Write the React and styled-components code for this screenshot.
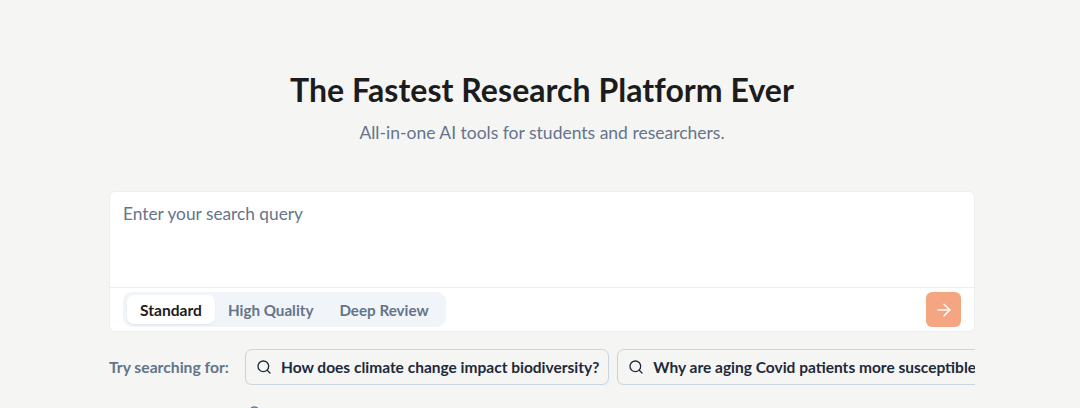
import React from "react";
import styled, { createGlobalStyle } from "styled-components";
import { Search, ArrowRight } from "lucide-react";

const FONT = `Lato, "Noto Sans", "Liberation Sans", sans-serif`;

const GlobalStyle = createGlobalStyle`
  html, body {
    margin: 0;
    padding: 0;
    height: 408px;
    overflow: hidden;
    background: #f5f5f4;
    font-family: ${FONT};
  }
  * { box-sizing: border-box; }
`;

const Page = styled.main`
  width: 1080px;
  height: 408px;
  overflow: hidden;
  padding: 68px 105px 0 109px;
`;

const Title = styled.h1`
  margin: 0;
  font-size: 32px;
  line-height: 44px;
  font-weight: 700;
  letter-spacing: 0.05px;
  color: #1c1c1c;
  text-align: center;
`;

const Subtitle = styled.p`
  margin: 9px 0 0;
  font-size: 17.5px;
  line-height: 24px;
  color: #64748b;
  text-align: center;
`;

const SearchCard = styled.section`
  margin-top: 46px;
  height: 141px;
  display: flex;
  flex-direction: column;
  background: #fff;
  border: 1px solid #eeeeee;
  border-radius: 6px;
`;

const QueryInput = styled.div`
  flex: 1;
  padding: 10px 13px;
  font-size: 17.3px;
  line-height: 24px;
  color: #64748b;
  border-bottom: 1px solid #eeeeee;
`;

const CardFooter = styled.div`
  flex: none;
  height: 43px;
  padding: 4px 13px;
  display: flex;
  align-items: center;
  justify-content: space-between;
`;

const ModeTabs = styled.div`
  display: flex;
  align-items: center;
  height: 35px;
  padding: 3px 4px;
  background: #f1f5f9;
  border-radius: 9px;
`;

const ModeTab = styled.button`
  border: 0;
  height: 29px;
  padding: 0 13px;
  font-family: inherit;
  font-size: ${(p) => (p.$active ? "15.6px" : "15.2px")};
  font-weight: 700;
  border-radius: 7px;
  color: ${(p) => (p.$active ? "#1c1c1c" : "#64748b")};
  background: ${(p) => (p.$active ? "#fff" : "transparent")};
  box-shadow: ${(p) => (p.$active ? "0 1px 2px rgba(0,0,0,0.08)" : "none")};
`;

const SubmitButton = styled.button`
  width: 35px;
  height: 35px;
  border: 0;
  padding: 0;
  display: flex;
  align-items: center;
  justify-content: center;
  border-radius: 6px;
  background: #f4a582;
  color: #fff;
`;

const SuggestionRow = styled.div`
  margin-top: 17px;
  display: flex;
  align-items: center;
  gap: 8px;
  overflow: hidden;
`;

const SuggestionLabel = styled.span`
  flex: none;
  width: 128px;
  font-size: 15.7px;
  font-weight: 700;
  color: #64748b;
`;

const Chip = styled.button`
  flex: none;
  height: 36px;
  padding: 0 9px 0 10px;
  display: flex;
  align-items: center;
  gap: 9px;
  font-family: inherit;
  font-size: 15.5px;
  font-weight: 700;
  color: #1e293b;
  background: #f5f5f4;
  border: 1px solid #cbd5e1;
  border-radius: 7px;
  box-shadow: 0 1px 2px rgba(0, 0, 0, 0.05);
  white-space: nowrap;
`;

const NextRowIcon = styled.div`
  margin: 20px 0 0 138px;
  color: #64748b;
  line-height: 0;
`;

export default function App() {
  return (
    <>
      <GlobalStyle />
      <Page>
        <Title>The Fastest Research Platform Ever</Title>
        <Subtitle>All-in-one AI tools for students and researchers.</Subtitle>
        <SearchCard>
          <QueryInput>Enter your search query</QueryInput>
          <CardFooter>
            <ModeTabs>
              <ModeTab $active>Standard</ModeTab>
              <ModeTab>High Quality</ModeTab>
              <ModeTab>Deep Review</ModeTab>
            </ModeTabs>
            <SubmitButton aria-label="Search">
              <ArrowRight size={20} strokeWidth={1.75} />
            </SubmitButton>
          </CardFooter>
        </SearchCard>
        <SuggestionRow>
          <SuggestionLabel>Try searching for:</SuggestionLabel>
          <Chip>
            <Search size={16} strokeWidth={2} />
            How does climate change impact biodiversity?
          </Chip>
          <Chip>
            <Search size={16} strokeWidth={2} />
            Why are aging Covid patients more susceptible to severe illness?
          </Chip>
        </SuggestionRow>
        <NextRowIcon>
          <Search size={16} strokeWidth={2} />
        </NextRowIcon>
      </Page>
    </>
  );
}
